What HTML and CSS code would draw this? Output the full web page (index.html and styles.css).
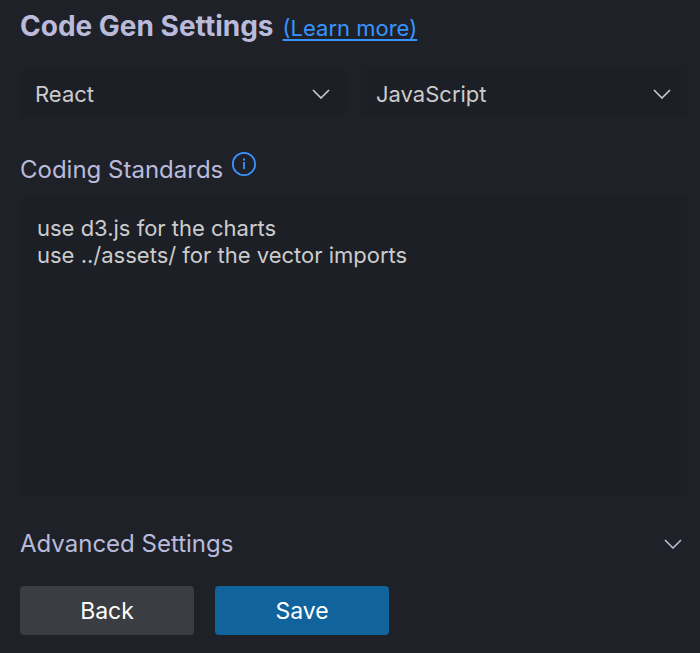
FILE: index.html
```html
<!DOCTYPE html>
<html lang="en">
<head>
    <meta charset="UTF-8">
    <meta name="viewport" content="width=device-width, initial-scale=1.0">
    <title>Code Gen Settings</title>
    <link rel="stylesheet" href="styles.css">
</head>
<body>
    <form class="settings">
        <header class="settings-header">
            <h1>Code Gen Settings</h1>
            <a href="#learn-more">(Learn more)</a>
        </header>

        <div class="select-row">
            <div class="select-box">
                <select name="framework" aria-label="Framework">
                    <option>React</option>
                </select>
                <svg class="chevron" viewBox="0 0 18 10" aria-hidden="true"><path d="M1 1l8 8 8-8"/></svg>
            </div>
            <div class="select-box">
                <select name="language" aria-label="Language">
                    <option>JavaScript</option>
                </select>
                <svg class="chevron" viewBox="0 0 18 10" aria-hidden="true"><path d="M1 1l8 8 8-8"/></svg>
            </div>
        </div>

        <div class="label-row">
            <label for="standards">Coding Standards</label>
            <svg class="info-icon" viewBox="0 0 26 26" aria-hidden="true">
                <circle class="ring" cx="13" cy="13" r="11.2"/>
                <rect x="12.1" y="11" width="1.8" height="7"/>
                <rect x="12" y="7.5" width="2" height="2"/>
            </svg>
        </div>
        <textarea id="standards" name="standards" spellcheck="false">use d3.js for the charts
use ../assets/ for the vector imports</textarea>

        <button type="button" class="advanced" aria-expanded="false">
            Advanced Settings
            <svg class="chevron" viewBox="0 0 18 10" aria-hidden="true"><path d="M1 1l8 8 8-8"/></svg>
        </button>

        <div class="actions">
            <button type="button" class="btn btn-back">Back</button>
            <button type="submit" class="btn btn-save">Save</button>
        </div>
    </form>
</body>
</html>
```

FILE: styles.css
```css
* {
    box-sizing: border-box;
}

body {
    margin: 0;
    background-color: #1f2129;
    color: #babbdb;
    font-family: Inter, "Liberation Sans", sans-serif;
    font-size: 24px;
}

.settings {
    display: flex;
    flex-direction: column;
    padding: 8px 13px 18px 20px;
}

.settings-header {
    display: flex;
    align-items: baseline;
    gap: 9px;
}

h1 {
    margin: 0;
    font-size: 28px;
    line-height: 36px;
}

a {
    color: #3794ff;
    font-size: 22px;
    text-underline-offset: 3px;
}

.select-row {
    display: grid;
    grid-template-columns: 1fr 1fr;
    gap: 15px;
    margin-top: 26px;
}

.select-box {
    display: grid;
    align-items: center;
}

.select-box > * {
    grid-area: 1 / 1;
}

select {
    appearance: none;
    width: 100%;
    height: 47px;
    padding: 0 48px 0 15px;
    border: none;
    border-radius: 4px;
    background-color: #1d1f26;
    color: #cccccc;
    font: inherit;
    font-size: 22px;
}

.chevron {
    width: 18px;
    height: 10px;
    fill: none;
    stroke: currentColor;
    stroke-width: 1.6;
}

.select-box .chevron {
    justify-self: end;
    margin-right: 16px;
    color: #cccccc;
    pointer-events: none;
}

.label-row {
    display: flex;
    gap: 8px;
    margin-top: 34px;
}

.label-row label {
    line-height: 37px;
}

.info-icon {
    width: 26px;
    height: 26px;
    fill: #3794ff;
}

.info-icon .ring {
    fill: none;
    stroke: #3794ff;
    stroke-width: 1.8;
}

textarea {
    height: 299px;
    margin-top: 9px;
    padding: 18px 17px;
    border: none;
    border-radius: 4px;
    background-color: #1d1f26;
    color: #cccccc;
    font: inherit;
    font-size: 22px;
    line-height: 27px;
    resize: none;
}

.advanced {
    display: flex;
    align-items: center;
    justify-content: space-between;
    margin-top: 30px;
    padding: 0 5px 0 0;
    border: none;
    background: none;
    color: inherit;
    font: inherit;
    line-height: 36px;
}

.actions {
    display: flex;
    gap: 21px;
    margin-top: 24px;
}

.btn {
    width: 174px;
    height: 49px;
    border: none;
    border-radius: 4px;
    color: #ffffff;
    font: inherit;
    font-size: 23px;
}

.btn-back {
    background-color: #3a3d41;
}

.btn-save {
    background-color: #11639e;
}
```
